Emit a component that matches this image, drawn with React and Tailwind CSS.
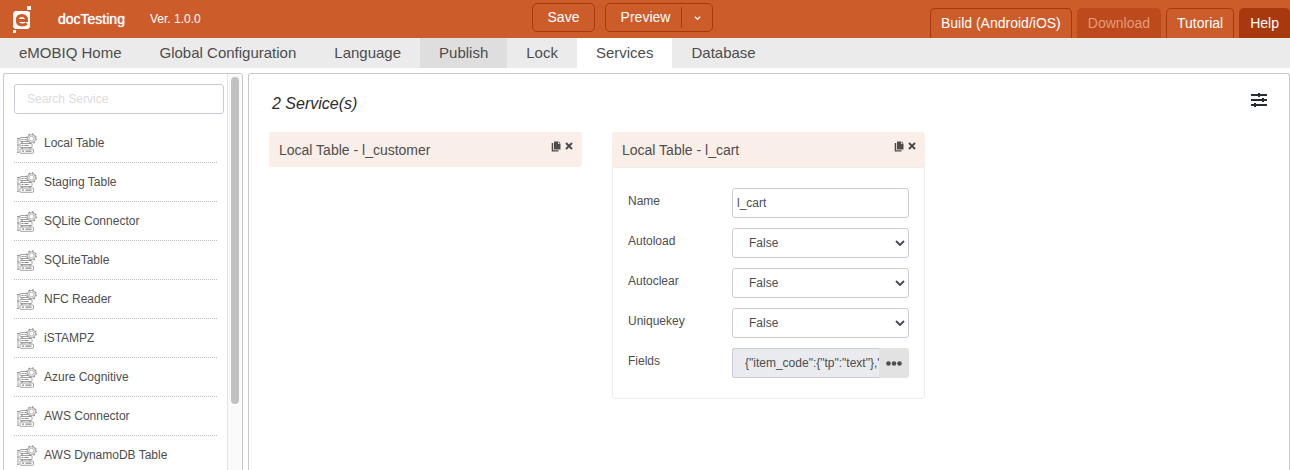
import { useState } from "react";

const tabs = ["eMOBIQ Home", "Global Configuration", "Language", "Publish", "Lock", "Services", "Database"];

const services = [
  "Local Table",
  "Staging Table",
  "SQLite Connector",
  "SQLiteTable",
  "NFC Reader",
  "iSTAMPZ",
  "Azure Cognitive",
  "AWS Connector",
  "AWS DynamoDB Table",
];

function Logo() {
  return (
    <svg viewBox="0 0 20 28" className="h-7 w-5" aria-hidden="true">
      <rect x="15" y="1" width="4" height="4" fill="#fff" />
      <rect x="1" y="25" width="3" height="3" fill="#fff" />
      <path d="M3 6h12l3 1v15l-2 2H3l-2-2V8z" fill="#fff" />
      <path d="M5.500 15.500h9c0-3.500-1.500-5-4.500-5-3.200 0-4.700 2-4.700 4.800 0 3 2 4.700 5 4.700 2 0 3.200-.5 4.400-1.600" fill="none" stroke="#cd5c2b" strokeWidth="3" />
    </svg>
  );
}

function ServiceIcon() {
  return (
    <svg viewBox="0 0 21 21" className="h-[21px] w-[21px] shrink-0" fill="none" stroke="#8a8a8a" strokeWidth="0.800" aria-hidden="true">
      <path d="M2 5v14M1 5.500h3M1 12h2M1 19.500h2" />
      <rect x="4" y="4.500" width="12" height="4" rx="0.800" />
      <rect x="4" y="10.500" width="12" height="4" rx="0.800" />
      <rect x="4" y="16" width="13.500" height="4.300" rx="0.800" />
      <path d="M5.500 6.500h2M8.500 6.500h2M5.500 12.500h2M8.500 12.500h4M6 18.200h2M9.500 18.200h6M6 8.500v2M13.500 8.500v2M6 14.500v1.500M14 14.500v1.500" strokeWidth="1.200" />
      <circle cx="15.500" cy="5.600" r="4.600" fill="#fff" stroke="none" />
      <circle cx="15.500" cy="5.600" r="4.800" strokeDasharray="1.800 1.970" strokeWidth="1.100" />
      <circle cx="15.500" cy="5.600" r="4" />
      <circle cx="15.500" cy="5.600" r="2.400" strokeWidth="0.600" />
    </svg>
  );
}

function CopyIcon() {
  return (
    <svg viewBox="0 0 10 11" className="h-[11px] w-[10px]" fill="#4d4d4d" aria-hidden="true">
      <path d="M3 .5h4V3h2.500v5.500H3z" />
      <path d="M7.600.3 9.700 2.500H7.600z" />
      <path d="M.7 2h1.500v7.300h5.300v1.200H.7z" />
    </svg>
  );
}

function CloseIcon() {
  return (
    <svg viewBox="0 0 8 8" className="h-2 w-2" stroke="#4d4d4d" strokeWidth="2" aria-hidden="true">
      <path d="M1 1l6 6M7 1L1 7" />
    </svg>
  );
}

function Chevron({ className }) {
  return (
    <svg viewBox="0 0 10 6" className={className} fill="none" stroke="currentColor" strokeWidth="2" aria-hidden="true">
      <path d="M1 1l4 4 4-4" />
    </svg>
  );
}

function Card({ title, children }) {
  return (
    <section className="w-[313px] overflow-hidden rounded-[3px]">
      <header className="flex h-[35px] justify-between bg-[#faeee8] pr-[9px] pl-[10px]">
        <h2 className="self-center text-sm">{title}</h2>
        <div className="flex h-7 items-center gap-1">
          <button type="button" aria-label="Copy"><CopyIcon /></button>
          <button type="button" aria-label="Remove"><CloseIcon /></button>
        </div>
      </header>
      {children}
    </section>
  );
}

function Row({ id, label, children }) {
  return (
    <div className="flex">
      <label htmlFor={id} className="w-[104px] pt-1 text-xs leading-[18px]">{label}</label>
      <div className="flex h-[30px] min-w-0 flex-1">{children}</div>
    </div>
  );
}

function BoolSelect({ id }) {
  return (
    <div className="relative w-full">
      <select id={id} defaultValue="False" className="h-full w-full appearance-none rounded-[3px] border border-[#c9ccd8] bg-white px-4 text-xs">
        <option>False</option>
        <option>True</option>
      </select>
      <Chevron className="pointer-events-none absolute top-3 right-1 h-[6px] w-[10px]" />
    </div>
  );
}

export default function App() {
  const [active, setActive] = useState("Services");
  return (
    <div className="flex h-screen flex-col overflow-hidden bg-white font-['Liberation_Sans',Arial,sans-serif] text-[#4d4d4d]">
      <header className="flex h-[38px] shrink-0 bg-[#cd5c2b] text-sm text-white">
        <div className="flex flex-1 items-center pl-3">
          <Logo />
          <span className="ml-[26px] [text-shadow:0_0_1px_#fff]">docTesting</span>
          <span className="ml-[25px] text-xs">Ver. 1.0.0</span>
        </div>
        <div className="mr-[57px] flex gap-[10px] pt-[3px] [text-shadow:0_0_1px_#fff]">
          <button type="button" className="h-[29px] w-[63px] rounded-[5px] border border-[#a8390e] pb-px">Save</button>
          <div className="flex h-[29px] w-[108px] items-center rounded-[5px] border border-[#a8390e]">
            <button type="button" className="flex-1 pb-px pl-1">Preview</button>
            <button type="button" aria-label="Preview options" className="flex h-[21px] w-[31px] items-center justify-center border-l border-[#a8390e]">
              <Chevron className="h-[4px] w-[7px]" />
            </button>
          </div>
        </div>
        <div className="flex flex-1 items-end justify-end gap-[5px] whitespace-nowrap [text-shadow:0_0_1px_currentColor]">
          <button type="button" className="h-[30px] rounded-t-[5px] border border-b-0 border-[#a8390e] px-[10px] pb-px">Build (Android/iOS)</button>
          <button type="button" disabled className="h-[30px] rounded-t-[5px] bg-[#bc4a1c] px-[11px] text-[#e39a79]">Download</button>
          <button type="button" className="h-[30px] rounded-t-[5px] border border-b-0 border-[#a8390e] px-[10px] pb-px">Tutorial</button>
          <button type="button" className="h-[30px] rounded-t-[5px] bg-[#a8390e] px-[11px]">Help</button>
        </div>
      </header>

      <nav className="flex h-[30px] shrink-0 bg-[#ebebeb] text-[15px]">
        {tabs.map((tab) => (
          <button
            key={tab}
            type="button"
            onClick={() => setActive(tab)}
            className={`px-[19px] ${tab === active ? "bg-white" : tab === "Publish" ? "bg-[#dedede]" : ""}`}
          >
            {tab}
          </button>
        ))}
      </nav>

      <div className="flex min-h-0 flex-1 gap-[5px] pt-[5px] pl-[3px]">
        <aside className="flex w-60 shrink-0 rounded-t-[3px] border border-b-0 border-[#c8c8c8]">
          <div className="min-w-0 flex-1 overflow-hidden pt-[10px] pl-[10px]">
            <input
              type="text"
              aria-label="Search Service"
              placeholder="Search Service"
              className="h-[30px] w-[210px] rounded-[3px] border border-[#c9ccd8] px-3 text-xs placeholder:text-[#dcdcdc]"
            />
            <ul className="mt-[10px] mr-[10px]">
              {services.map((name) => (
                <li key={name} className="flex h-[39px] items-center gap-[7px] border-b border-dotted border-[#bdbdbd] pl-[2px] text-xs">
                  <ServiceIcon />
                  {name}
                </li>
              ))}
            </ul>
          </div>
          <div className="w-[15px] shrink-0 border-l border-[#e6e6e6] bg-[#fafafa] px-[3px] pt-[3px]">
            <div className="h-[327px] rounded-full bg-[#c1c1c1]" />
          </div>
        </aside>

        <main className="min-w-0 flex-1 rounded-t-[3px] border border-b-0 border-[#c8c8c8] px-5">
          <div className="flex h-[58px] items-center justify-between pl-[3px]">
            <h1 className="pt-px text-base text-[#2b2b2b] italic">2 Service(s)</h1>
            <button type="button" aria-label="Settings" className="mr-[2px] mb-[6px]">
              <svg viewBox="0 0 16 14" className="h-[14px] w-4" stroke="#252e33" strokeWidth="2" aria-hidden="true">
                <path d="M0 2h16M0 7h16M0 12h16M8 0v4M12 5v4M4 10v4" />
              </svg>
            </button>
          </div>
          <div className="flex flex-wrap items-start gap-[30px]">
            <Card title="Local Table - l_customer" />
            <Card title="Local Table - l_cart">
              <div className="flex flex-col gap-[10px] rounded-b-[3px] border border-[#ececec] px-[15px] py-5">
                <Row id="name" label="Name">
                  <input id="name" type="text" defaultValue="l_cart" className="w-full rounded-[3px] border border-[#c9ccd8] px-1 text-xs" />
                </Row>
                <Row id="autoload" label="Autoload"><BoolSelect id="autoload" /></Row>
                <Row id="autoclear" label="Autoclear"><BoolSelect id="autoclear" /></Row>
                <Row id="uniquekey" label="Uniquekey"><BoolSelect id="uniquekey" /></Row>
                <Row id="fields" label="Fields">
                  <input
                    id="fields"
                    type="text"
                    readOnly
                    defaultValue={'{"item_code":{"tp":"text"},"item_name":{"tp":"text"}}'}
                    className="min-w-0 flex-1 rounded-l-[3px] border border-r-0 border-[#c9ccd8] bg-[#e9ebef] pl-3 text-xs"
                  />
                  <button type="button" aria-label="Edit fields" className="flex w-[30px] items-center justify-center rounded-r-[3px] bg-[#e2e2e2]">
                    <svg viewBox="0 0 16 5" className="h-[5px] w-4" fill="#4d4d4d" aria-hidden="true">
                      <circle cx="2.500" cy="2.500" r="2.300" />
                      <circle cx="8" cy="2.500" r="2.300" />
                      <circle cx="13.500" cy="2.500" r="2.300" />
                    </svg>
                  </button>
                </Row>
              </div>
            </Card>
          </div>
        </main>
      </div>
    </div>
  );
}
